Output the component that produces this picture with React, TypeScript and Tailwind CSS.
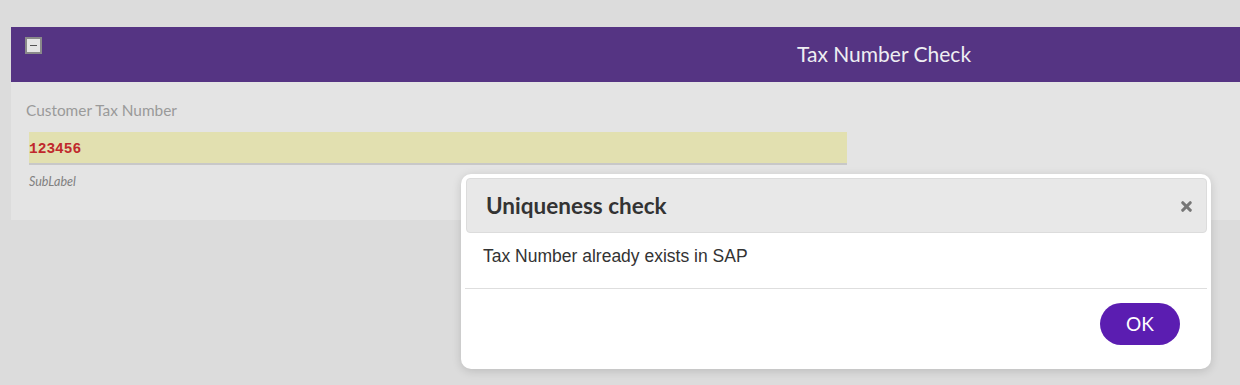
import React from "react";
import { X } from "lucide-react";

const lato = { fontFamily: "Lato, 'Open Sans', sans-serif" };

const App: React.FC = () => {
    return (
        <div className="relative h-[385px] w-[1240px] overflow-hidden bg-[#dcdcdc] pt-[27px] pl-[11px]" style={lato}>
            <section className="w-[1229px]">
                <header className="flex h-[55px] items-start bg-[#553483]">
                    <button className="ml-[14px] mt-[10px] box-border flex h-[17px] w-[17px] items-center justify-center border-2 border-[#8a8a8a] bg-[#e6e6e6]">
                        <span className="block h-[1px] w-[7px] bg-[#555]" />
                    </button>
                    <h1 className="ml-[755px] mt-[13px] text-[21px] leading-[28px] text-[#eeeef2]">Tax Number Check</h1>
                </header>

                <div className="h-[138px] bg-[#e4e4e4] pl-[15px] pt-[18px]">
                    <label className="block text-[15.4px] leading-[20px] text-[#9a9a9a]">Customer Tax Number</label>
                    <div className="ml-[3px] mt-[12px] flex h-[33px] w-[818px] items-center border-b-2 border-[#c8c8c8] bg-[#e2e0b0] pt-[4px]">
                        <span className="text-[14.5px] font-bold text-[#c0282c]" style={{ fontFamily: "'Liberation Mono', monospace" }}>
                            123456
                        </span>
                    </div>
                    <div className="ml-[3px] mt-[9px] text-[12.5px] italic leading-[16px] text-[#808080]">SubLabel</div>
                </div>
            </section>

            {/* dialog */}
            <div className="absolute left-[461px] top-[174px] flex h-[195px] w-[750px] flex-col rounded-[10px] bg-white p-[4px] shadow-[0_2px_10px_rgba(0,0,0,0.15)]">
                <div className="ml-[1px] flex h-[55px] items-center justify-between rounded-[4px] border border-[#dcdcdc] bg-[#e8e8e8] pl-[19px] pr-[12px]">
                    <h2 className="text-[22.5px] font-bold text-[#333]">Uniqueness check</h2>
                    <X size={15} strokeWidth={5} className="mt-[1px] text-[#777]" />
                </div>
                <p className="h-[55px] pl-[18px] pt-[10px] text-[17.5px] text-[#333]" style={{ fontFamily: "'Liberation Sans', Arial, sans-serif" }}>
                    Tax Number already exists in SAP
                </p>
                <div className="flex flex-1 justify-end border-t border-[#dedede] pr-[27px] pt-[14px]">
                    <button className="h-[42px] w-[80px] rounded-full bg-[#5b1db1] text-[19px] text-white">OK</button>
                </div>
            </div>
        </div>
    );
};

export default App;
